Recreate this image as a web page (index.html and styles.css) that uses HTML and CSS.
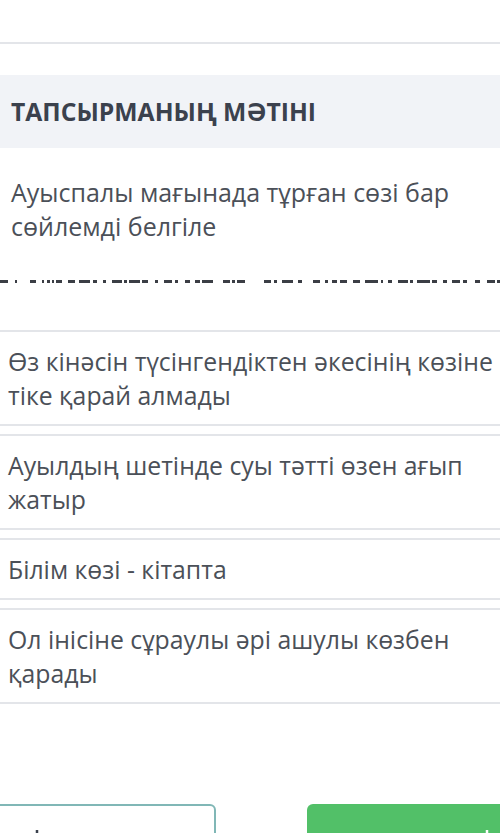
FILE: index.html
```html
<!DOCTYPE html>
<html lang="kk">
<head>
    <meta charset="UTF-8">
    <meta name="viewport" content="width=device-width, initial-scale=1.0">
    <title>Тапсырма</title>
    <link rel="stylesheet" href="styles.css">
</head>
<body>
    <div class="topbar"></div>

    <div class="task-head">
        <h2>ТАПСЫРМАНЫҢ МӘТІНІ</h2>
    </div>

    <p class="question">Ауыспалы мағынада тұрған сөзі бар сөйлемді белгіле</p>

    <!-- жасырын мәтіннің сызығы -->
    <svg class="dots" width="500" height="4" viewBox="0 0 500 4">
        <g fill="#3b3e45">
            <rect x="0" y="0" width="8" height="3"/><rect x="15" y="0" width="2" height="3"/>
            <rect x="30" y="0" width="6" height="3"/><rect x="42" y="0" width="2" height="3"/>
            <rect x="47" y="0" width="3" height="3"/><rect x="52" y="0" width="2" height="3"/>
            <rect x="56" y="0" width="6" height="3"/><rect x="68" y="0" width="7" height="3"/>
            <rect x="79" y="0" width="11" height="3"/><rect x="93" y="0" width="4" height="3"/>
            <rect x="103" y="0" width="3" height="3"/><rect x="112" y="0" width="10" height="3"/>
            <rect x="124" y="0" width="3" height="3"/><rect x="129" y="0" width="11" height="3"/>
            <rect x="142" y="0" width="6" height="3"/><rect x="155" y="0" width="3" height="3"/>
            <rect x="164" y="0" width="8" height="3"/><rect x="175" y="0" width="3" height="3"/>
            <rect x="185" y="0" width="5" height="3"/><rect x="195" y="0" width="5" height="3"/>
            <rect x="202" y="0" width="11" height="3"/><rect x="223" y="0" width="7" height="3"/>
            <rect x="232" y="0" width="3" height="3"/><rect x="237" y="0" width="8" height="3"/>
            <rect x="264" y="0" width="7" height="3"/><rect x="274" y="0" width="3" height="3"/>
            <rect x="282" y="0" width="11" height="3"/><rect x="298" y="0" width="4" height="3"/>
            <rect x="313" y="0" width="7" height="3"/><rect x="325" y="0" width="3" height="3"/>
            <rect x="332" y="0" width="5" height="3"/><rect x="340" y="0" width="7" height="3"/>
            <rect x="353" y="0" width="7" height="3"/><rect x="365" y="0" width="13" height="3"/>
            <rect x="381" y="0" width="2" height="3"/><rect x="388" y="0" width="4" height="3"/>
            <rect x="398" y="0" width="10" height="3"/><rect x="410" y="0" width="3" height="3"/>
            <rect x="417" y="0" width="13" height="3"/><rect x="432" y="0" width="5" height="3"/>
            <rect x="443" y="0" width="4" height="3"/><rect x="452" y="0" width="8" height="3"/>
            <rect x="463" y="0" width="4" height="3"/><rect x="475" y="0" width="5" height="3"/>
            <rect x="487" y="0" width="8" height="3"/><rect x="497" y="0" width="3" height="3"/>
        </g>
    </svg>

    <div class="options">
        <div class="option">Өз кінәсін түсінгендіктен әкесінің көзіне тіке қарай алмады</div>
        <div class="option">Ауылдың шетінде суы тәтті өзен ағып жатыр</div>
        <div class="option">Білім көзі - кітапта</div>
        <div class="option">Ол інісіне сұраулы әрі ашулы көзбен қарады</div>
    </div>

    <div class="nav-buttons">
        <button class="btn-back" aria-label="Артқа">
            <svg width="12" height="14" viewBox="0 0 12 14"><path d="M4 0v14" stroke="#3b414d" stroke-width="2.5" fill="none"/></svg>
        </button>
        <button class="btn-next" aria-label="Келесі">
            <svg width="12" height="14" viewBox="0 0 12 14"><path d="M4 0v14" stroke="#ffffff" stroke-width="2.5" fill="none"/></svg>
        </button>
    </div>
</body>
</html>
```

FILE: styles.css
```css
body {
    font-family: 'Open Sans', 'Noto Sans', sans-serif;
    background-color: #ffffff;
    color: #4b5058;
    margin: 0;
    padding: 0;
    overflow: hidden;
}

.topbar {
    height: 42px;
    border-bottom: 2px solid #e3e5e9;
}

.task-head {
    margin-top: 31px;
    height: 73px;
    background-color: #f1f3f7;
    display: flex;
    align-items: center;
    padding-left: 11px;
}

.task-head h2 {
    margin: 0;
    font-size: 24.7px;
    font-weight: 700;
    color: #3b414d;
}

.question {
    margin: 27px 0 0;
    padding: 0 11px;
    font-size: 25px;
    line-height: 34px;
}

.dots {
    display: block;
    margin-top: 37px;
}

.options {
    margin: 46px -12px 0 0;
    display: flex;
    flex-direction: column;
    gap: 8px;
}

.option {
    border-top: 2px solid #e3e5e9;
    border-bottom: 2px solid #e3e5e9;
    padding: 12px 0 12px 8px;
    font-size: 24.8px;
    line-height: 34px;
}

.nav-buttons {
    display: flex;
    justify-content: space-between;
    margin: 100px -160px 0 -10px;
}

button {
    width: 226px;
    height: 66px;
    border-radius: 6px;
    cursor: pointer;
    display: flex;
    align-items: flex-start;
    padding-top: 24px;
}

.btn-back {
    background-color: #fff;
    border: 2px solid #80b7b6;
    padding-left: 41px;
}

.btn-next {
    width: 353px;
    background-color: #52c068;
    border: none;
    padding-left: 176px;
    padding-top: 26px;
}
```
